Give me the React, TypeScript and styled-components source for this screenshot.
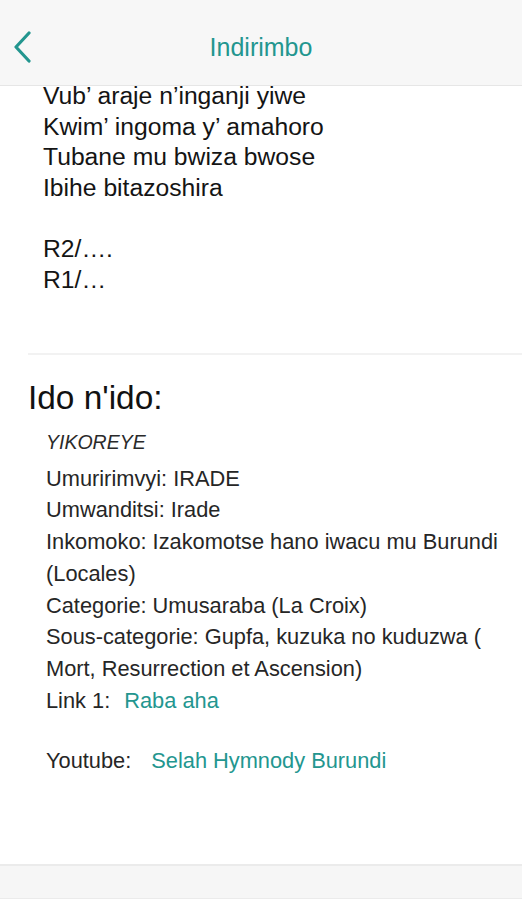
import React from "react";
import styled, { createGlobalStyle } from "styled-components";

const Global = createGlobalStyle`
  html, body { margin: 0; padding: 0; background: #ffffff; }
  body { font-family: "Liberation Sans", Arial, sans-serif; -webkit-font-smoothing: antialiased; }
  * { box-sizing: border-box; }
`;

const TEAL = "#23968f";

const Screen = styled.div`
  width: 522px;
  height: 900px;
  display: flex;
  flex-direction: column;
  background: #ffffff;
  overflow: hidden;
`;

const Header = styled.header`
  height: 86px;
  flex-shrink: 0;
  background: #f7f7f7;
  border-bottom: 1px solid #e6e6e6;
  display: grid;
  grid-template-columns: 60px 1fr 60px;
  align-items: center;
  padding-top: 9px;
`;

const BackButton = styled.button`
  border: 0;
  background: transparent;
  padding: 0 0 0 13px;
  display: flex;
  align-items: center;
  height: 40px;
  cursor: pointer;
`;

const Title = styled.h1`
  margin: 0;
  text-align: center;
  font-size: 25px;
  font-weight: 400;
  color: ${TEAL};
  font-family: "Liberation Sans", Arial, sans-serif;
`;

const Content = styled.main`
  flex: 1;
  display: flex;
  flex-direction: column;
`;

const Lyrics = styled.div`
  padding: 0 0 0 43px;
  margin-top: -5px;
  height: 272px;
`;

const Stanza = styled.p`
  margin: 0 0 31px 0;
  font-size: 24.7px;
  line-height: 30.5px;
  color: #141414;
`;

const Divider = styled.hr`
  margin: 0 0 0 28px;
  border: 0;
  border-top: 2px solid #f2f2f2;
`;

const Info = styled.section`
  padding: 26px 0 0 28px;
`;

const InfoTitle = styled.h2`
  margin: 0 0 12px 0;
  font-size: 33.4px;
  font-weight: 400;
  line-height: 34px;
  color: #111;
`;

const InfoBody = styled.div`
  padding-left: 18px;
  padding-right: 6px;
  font-size: 21.8px;
  line-height: 31.7px;
  color: #262626;
`;

const Composer = styled.div`
  font-style: italic;
  font-size: 19.5px;
  color: #2a2a2a;
  margin-bottom: 4px;
`;

const Line = styled.div<{ $gap?: number }>`
  margin-top: ${(p) => p.$gap ?? 0}px;
`;

const LinkText = styled.a<{ $indent: number }>`
  color: ${TEAL};
  text-decoration: none;
  margin-left: ${(p) => p.$indent}px;
`;

const Spacer = styled.div`
  flex: 1;
`;

const Footer = styled.footer`
  height: 35px;
  flex-shrink: 0;
  margin-bottom: 1px;
  background: #f6f6f6;
  border-top: 2px solid #ebebeb;
  border-bottom: 1px solid #ebebeb;
`;

export default function App() {
  return (
    <>
      <Global />
      <Screen>
        <Header>
          <BackButton aria-label="Back">
            <svg width="20" height="32" viewBox="0 0 20 32" fill="none">
              <path d="M16 2 L3 16 L16 30" stroke={TEAL} strokeWidth="3.2" strokeLinecap="round" strokeLinejoin="round" />
            </svg>
          </BackButton>
          <Title>Indirimbo</Title>
          <div />
        </Header>
        <Content>
          <Lyrics>
            <Stanza>
              Vub’ araje n’inganji yiwe
              <br />
              Kwim’ ingoma y’ amahoro
              <br />
              Tubane mu bwiza bwose
              <br />
              Ibihe bitazoshira
            </Stanza>
            <Stanza>
              R2/….
              <br />
              R1/…
            </Stanza>
          </Lyrics>
          <Divider />
          <Info>
            <InfoTitle>Ido n'ido:</InfoTitle>
            <InfoBody>
              <Composer>YIKOREYE</Composer>
              <Line>Umuririmvyi: IRADE</Line>
              <Line>Umwanditsi: Irade</Line>
              <Line>Inkomoko: Izakomotse hano iwacu mu Burundi (Locales)</Line>
              <Line>Categorie: Umusaraba (La Croix)</Line>
              <Line>Sous-categorie: Gupfa, kuzuka no kuduzwa ( Mort, Resurrection et Ascension)</Line>
              <Line>
                Link 1:<LinkText $indent={14}>Raba aha</LinkText>
              </Line>
              <Line $gap={29}>
                Youtube:<LinkText $indent={20}>Selah Hymnody Burundi</LinkText>
              </Line>
            </InfoBody>
          </Info>
          <Spacer />
        </Content>
        <Footer />
      </Screen>
    </>
  );
}
